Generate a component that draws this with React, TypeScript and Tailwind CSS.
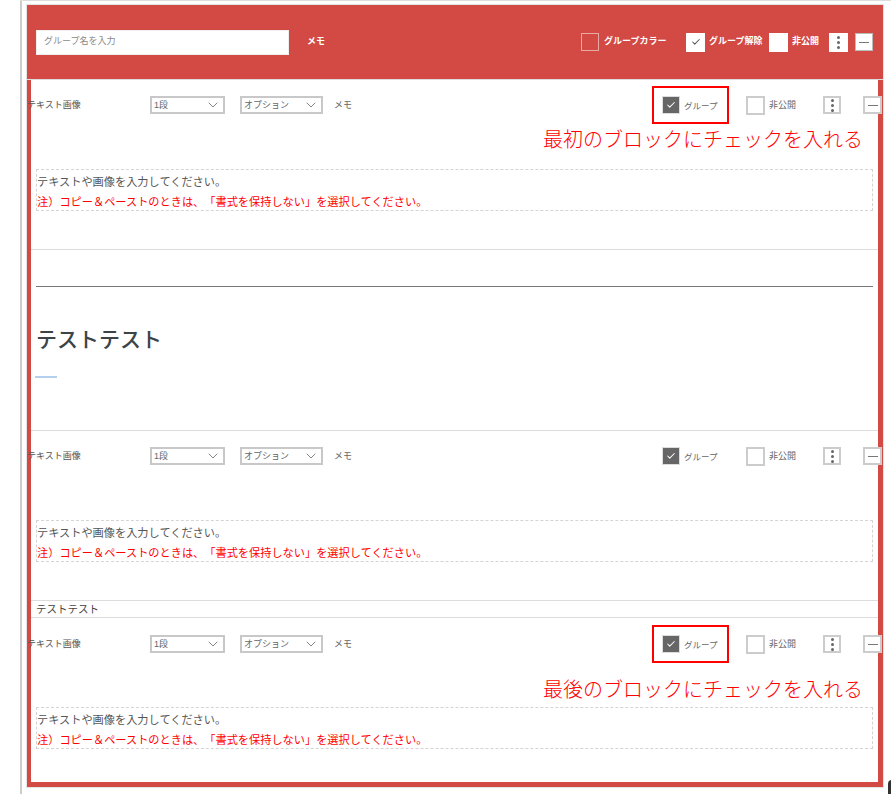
import { Check, ChevronDown } from "lucide-react";

const jp = "font-['Liberation_Sans','Noto_Sans_CJK_JP',sans-serif] [text-spacing-trim:space-all]";

function Dots({ className }: { className: string }) {
    return (
        <div className={`flex flex-col items-center justify-center gap-[2px] bg-white ${className}`}>
            <span className="w-[3px] h-[3px] rounded-full bg-[#666]" />
            <span className="w-[3px] h-[3px] rounded-full bg-[#666]" />
            <span className="w-[3px] h-[3px] rounded-full bg-[#666]" />
        </div>
    );
}

function Minus({ className }: { className: string }) {
    return (
        <div className={`flex items-center justify-center bg-white ${className}`}>
            <span className="w-[10px] h-px bg-[#777]" />
        </div>
    );
}

function Select({ label, width }: { label: string; width: string }) {
    return (
        <div className={`flex items-center justify-between h-[18px] border-2 border-[#c8c8c8] pl-[2px] pr-[2px] text-[9px] text-[#666] bg-white ${width}`}>
            <span className="mt-[2px]">{label}</span>
            <ChevronDown className="w-4 h-4 text-[#666]" strokeWidth={1.2} />
        </div>
    );
}

function Block({ bottom, top, editorTop, note, noteTop, boxTop }: { bottom: string; top: string; editorTop: string; note?: string; noteTop?: string; boxTop?: string }) {
    return (
        <div className={`relative ${top} ${bottom}`}>
            <div className="flex items-center h-[18px] -ml-1 -mr-1 text-[9px] text-[#666]">
                <span className="w-[123px] mt-[2px] text-[#555]">テキスト画像</span>
                <Select label="1段" width="w-[75px]" />
                <div className="w-[15px]" />
                <Select label="オプション" width="w-[83px]" />
                <span className="ml-[11px] mt-[2px] w-[18px]">メモ</span>
                <div className="ml-auto flex items-center">
                    <div className="w-[18px] h-[18px] bg-[#666] border border-[#ddd] flex items-center justify-center">
                        <Check className="w-[10px] h-[10px] text-white" strokeWidth={2.5} />
                    </div>
                    <span className="ml-1 mt-[2px] w-[35px] text-[8.5px] whitespace-nowrap">グループ</span>
                    <div className="ml-[27px] w-[19px] h-[19px] border-2 border-[#ccc] bg-white" />
                    <span className="ml-1 mt-[2px] w-[28px] whitespace-nowrap">非公開</span>
                    <Dots className="ml-[26px] w-[18px] h-[18px] border-2 border-[#ccc]" />
                    <Minus className="ml-[22px] w-[19px] h-[18px] border-2 border-[#ccc]" />
                </div>
            </div>
            <div className={`mx-[5px] h-[42px] border border-dashed border-[#d4d4d4] ${editorTop}`}>
                <p className="pt-[2px] text-[11.2px] leading-[21px] text-[#555]">テキストや画像を入力してください。</p>
                <p className="text-[11.2px] leading-[18px] text-[#f00]">注）コピー＆ペーストのときは、「書式を保持しない」を選択してください。</p>
            </div>
            {boxTop && <div className={`absolute left-[621px] w-[77px] h-[38px] border-2 border-[#f00] ${boxTop}`} />}
            {note && (
                <div className={`absolute right-[15px] text-[20px] leading-[26px] font-light text-[#f00] whitespace-nowrap ${noteTop}`}>{note}</div>
            )}
        </div>
    );
}

export default function App() {
    return (
        <div className={`relative w-[891px] h-[794px] overflow-hidden bg-white pl-5 ${jp}`}>
            <div className="h-full border-l-2 border-[#ccc] pl-[5px] pt-[1px]">
                <div className="absolute left-5 right-0 top-0 h-px bg-[#ddd]" />
                <div className="mt-1 w-[856px] border-l-[4px] border-r-[5px] border-b-[5px] border-[#d24a43] shadow-[0_0_0_1px_#e4e4e4]">
                    {/* group header */}
                    <div className="-ml-1 -mr-[5px] h-[75px] bg-[#d24a43] flex items-center pl-[9px] pr-[10px] text-white text-[9px] font-bold border-b border-[#ddd]">
                        <div className="w-[253px] h-[25px] bg-white border border-[#eee] pl-[7px] flex items-center font-normal text-[#8a8a8a]">
                            グループ名を入力
                        </div>
                        <span className="ml-[18px]">メモ</span>
                        <div className="ml-auto flex items-center">
                            <div className="w-[18px] h-[18px] border border-[#eba9a5]" />
                            <span className="ml-[5px] w-[63px] whitespace-nowrap">グループカラー</span>
                            <div className="ml-[19px] w-[19px] h-[19px] bg-white flex items-center justify-center">
                                <Check className="w-[10px] h-[10px] text-[#555]" strokeWidth={2.5} />
                            </div>
                            <span className="ml-1 w-[53px] whitespace-nowrap">グループ解除</span>
                            <div className="ml-[7px] w-[19px] h-[19px] bg-white" />
                            <span className="ml-1 w-[27px] whitespace-nowrap">非公開</span>
                            <Dots className="ml-[10px] w-[19px] h-[19px]" />
                            <Minus className="ml-[7px] w-[18px] h-[18px] border border-[#bbb]" />
                        </div>
                    </div>

                    <div className="border-b border-[#ddd]">
                        <Block top="pt-4" editorTop="mt-[55px]" bottom="pb-[38px]" boxTop="top-[6px]" note="最初のブロックにチェックを入れる" noteTop="top-[47px]" />
                    </div>

                    {/* section preview */}
                    <div className="h-[181px] border-b border-[#ddd] px-[5px] pt-9">
                        <div className="h-px bg-[#777]" />
                        <h2 className="mt-[38px] text-[21px] leading-[30px] font-medium text-[#3c4448]">テストテスト</h2>
                        <div className="mt-[21px] -ml-px w-[22px] h-[2px] bg-[#b4d0ee]" />
                    </div>

                    <div className="border-b border-[#ddd]">
                        <Block top="pt-4" editorTop="mt-[55px]" bottom="pb-[38px]" />
                    </div>

                    <div className="h-[17px] border-b border-[#ddd] pl-[5px] text-[10.5px] leading-4 text-[#444]">テストテスト</div>

                    <Block top="pt-[17px]" editorTop="mt-[54px]" bottom="pb-[33px]" boxTop="top-[7px]" note="最後のブロックにチェックを入れる" noteTop="top-[59px]" />
                </div>
            </div>
            <div className="absolute left-[888px] top-[780px] w-[8px] h-[18px] rounded-full bg-[#333]" />
        </div>
    );
}
